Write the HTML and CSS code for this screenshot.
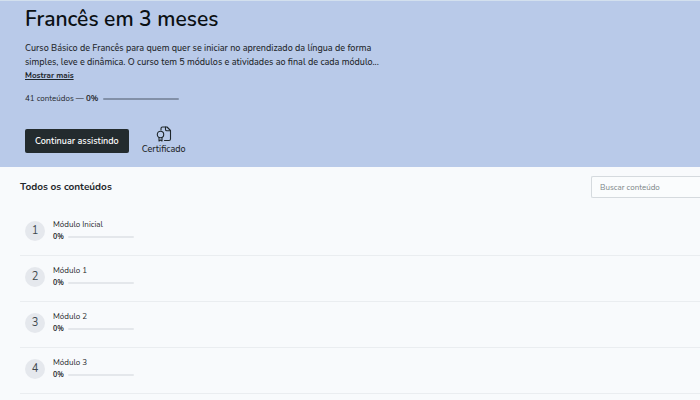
FILE: index.html
```html
<!DOCTYPE html>
<html lang="pt-BR">
<head>
  <meta charset="UTF-8">
  <meta name="viewport" content="width=device-width, initial-scale=1.0">
  <title>Francês em 3 meses</title>
  <link rel="stylesheet" href="styles.css">
</head>
<body>
  <header class="hero">
    <h1>Francês em 3 meses</h1>
    <p class="description">
      Curso Básico de Francês para quem quer se iniciar no aprendizado da língua de forma<br>
      simples, leve e dinâmica. O curso tem 5 módulos e atividades ao final de cada módulo...
    </p>
    <a class="show-more" href="#">Mostrar mais</a>

    <div class="course-progress">
      <span>41 conteúdos — <strong>0%</strong></span>
      <div class="bar"></div>
    </div>

    <div class="actions">
      <button class="btn-primary" type="button">Continuar assistindo</button>
      <a class="certificate" href="#">
        <svg width="16" height="16" viewBox="0 0 16 16" fill="none" stroke="currentColor" stroke-width="1.1" stroke-linejoin="round" stroke-linecap="round">
          <path d="M5 4V2.4C5 1.5 5.6 1 6.5 1H11l3.5 3.5V13c0 1-.6 1.5-1.5 1.5H8.5"/>
          <path d="M9.5 1v2.5c0 .8.5 1.3 1.3 1.3h3.5"/>
          <circle cx="4.5" cy="8.5" r="3.2"/>
          <path d="M3 11.5V15l1.5-1L6 15v-3.5"/>
        </svg>
        <span>Certificado</span>
      </a>
    </div>
  </header>

  <main class="contents">
    <div class="contents-header">
      <h2>Todos os conteúdos</h2>
      <input class="search" type="text" placeholder="Buscar conteúdo" aria-label="Buscar conteúdo">
    </div>

    <ol class="module-list">
      <li class="module">
        <span class="number">1</span>
        <div class="module-info">
          <div class="module-title">Módulo Inicial</div>
          <div class="module-progress"><strong>0%</strong><div class="bar"></div></div>
        </div>
      </li>
      <li class="module">
        <span class="number">2</span>
        <div class="module-info">
          <div class="module-title">Módulo 1</div>
          <div class="module-progress"><strong>0%</strong><div class="bar"></div></div>
        </div>
      </li>
      <li class="module">
        <span class="number">3</span>
        <div class="module-info">
          <div class="module-title">Módulo 2</div>
          <div class="module-progress"><strong>0%</strong><div class="bar"></div></div>
        </div>
      </li>
      <li class="module">
        <span class="number">4</span>
        <div class="module-info">
          <div class="module-title">Módulo 3</div>
          <div class="module-progress"><strong>0%</strong><div class="bar"></div></div>
        </div>
      </li>
    </ol>
  </main>
</body>
</html>
```
FILE: styles.css
```css
* {
  box-sizing: border-box;
  margin: 0;
  padding: 0;
}

body {
  font-family: Nunito, "Nunito Sans", Lato, "Open Sans", sans-serif;
  font-size: 8px;
  line-height: 14px;
  color: #1f272b;
  background-color: #f8fafc;
}

/* Course header */
.hero {
  padding: 4px 25px 11px;
  background-color: #b9cae9;
  border-top: 1px solid #d3e0ee;
}

.hero h1 {
  margin-bottom: 8px;
  font-size: 21px;
  font-weight: 600;
  line-height: 28px;
  color: #0b1013;
}

.description {
  font-size: 9px;
  font-weight: 500;
  white-space: nowrap;
}

.show-more {
  display: block;
  width: max-content;
  font-weight: 700;
  color: inherit;
}

.course-progress {
  display: flex;
  align-items: center;
  gap: 5px;
  margin-top: 9px;
}

.bar {
  height: 2px;
  border-radius: 1px;
  background-color: #e4e7eb;
}

.course-progress .bar {
  width: 76px;
  background-color: #8290a8;
}

.actions {
  display: flex;
  align-items: center;
  gap: 13px;
  margin-top: 20px;
}

.btn-primary {
  height: 24px;
  padding: 0 10px;
  border: none;
  border-radius: 2px;
  font: inherit;
  font-size: 9px;
  font-weight: 600;
  color: #fff;
  background-color: #232b2e;
  cursor: pointer;
}

.certificate {
  display: flex;
  flex-direction: column;
  align-items: center;
  font-size: 9px;
  font-weight: 500;
  color: inherit;
  text-decoration: none;
}

/* Module list */
.contents {
  padding: 9px 0 0 20px;
}

.contents-header {
  display: flex;
  align-items: center;
  justify-content: space-between;
  margin-bottom: 12px;
}

.contents-header h2 {
  font-size: 10px;
  font-weight: 700;
}

.search {
  width: 109px;
  height: 22px;
  padding: 0 8px;
  border: 1px solid #d5dade;
  border-right: none;
  border-radius: 2px 0 0 2px;
  font: inherit;
  color: inherit;
  background-color: #fafcfd;
}

.search::placeholder {
  color: #7b8486;
}

.module-list {
  list-style: none;
}

.module {
  display: flex;
  align-items: center;
  gap: 8px;
  height: 46px;
  padding: 0 0 3px 5px;
  border-bottom: 1px solid #eaedf0;
}

.number {
  width: 20px;
  height: 20px;
  border-radius: 50%;
  font-size: 11px;
  line-height: 20px;
  text-align: center;
  color: #40484e;
  background-color: #e5e8ed;
}

.module-info {
  line-height: 12px;
}

.module-progress {
  display: flex;
  align-items: center;
  gap: 4px;
  font-size: 7px;
}

.module-progress .bar {
  width: 66px;
}
```
